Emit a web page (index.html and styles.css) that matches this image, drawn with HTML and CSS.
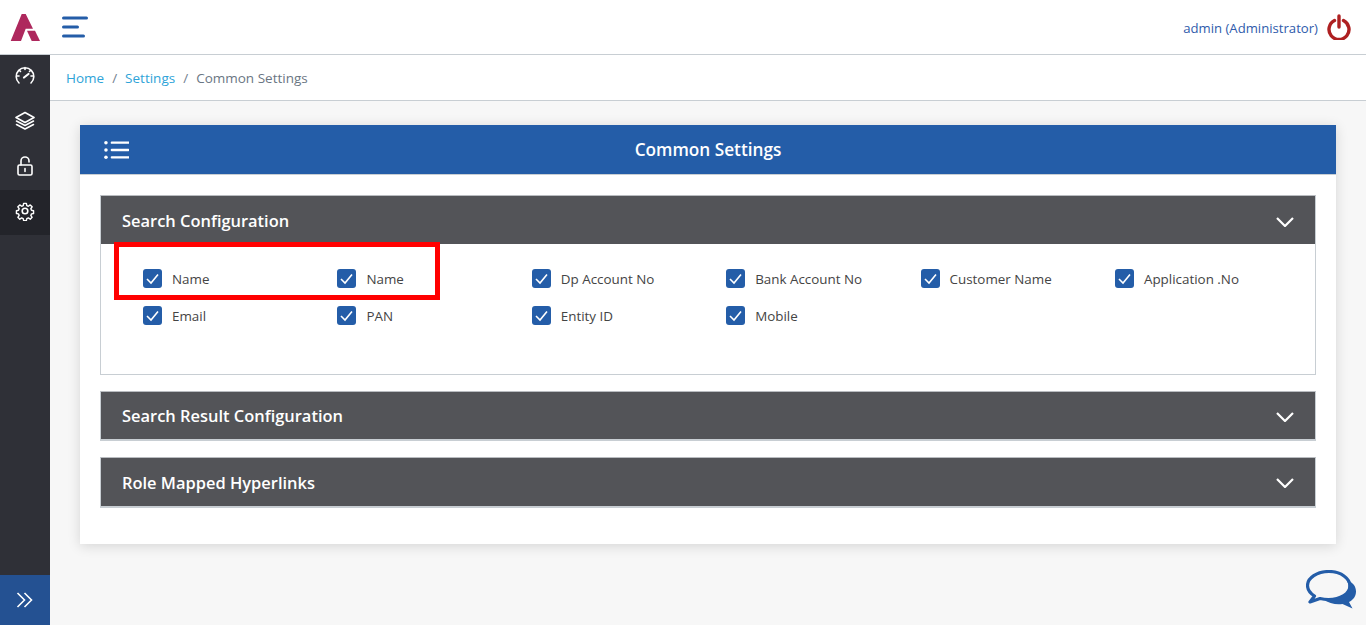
FILE: index.html
```html
<!DOCTYPE html>
<html lang="en">
<head>
<meta charset="utf-8">
<title>Common Settings</title>
<link rel="stylesheet" href="styles.css">
</head>
<body>
<header class="topbar">
  <svg class="logo" viewBox="0 0 30 27"><path fill="#ae285d" d="M.7 27 11.700 0h4L23 14.700h-7.300L11 27z"/><path fill="#ae285d" d="M17 16.700h8L30 27h-8.300z"/></svg>
  <svg class="menu-icon" viewBox="0 0 26 22"><path d="M1.500 2h23M1.500 11h14M1.500 20h20" stroke="#245da8" stroke-width="3" stroke-linecap="round" fill="none"/></svg>
  <div class="user">
    <span class="user-name">admin (Administrator)</span>
    <svg class="power" viewBox="0 0 24 26"><path d="M7.500 6.500a10 10 0 1 0 9 0" fill="none" stroke="#ae2021" stroke-width="3.400" stroke-linecap="round"/><path d="M12 2v11" stroke="#ae2021" stroke-width="3.400" stroke-linecap="round"/></svg>
  </div>
</header>
<div class="layout">
  <aside class="sidebar">
    <a class="nav-item"><svg viewBox="0 0 20 20" class="nav-icon"><path d="M4 17A8.800 8.800 0 1 1 16 17M10 1.500v2M2 10H4M16 10h2M4 4l1.500 1.500M16 4l-1.500 1.500" /><path d="M9 11.500 13.500 8" stroke-width="2.200"/></svg></a>
    <a class="nav-item"><svg viewBox="0 0 20 20" class="nav-icon"><path d="M10 1.500 19 6.500 10 11.500 1 6.500z"/><path d="M1.500 10 10 14.500 18.500 10M1.500 13.500 10 18 18.500 13.500"/></svg></a>
    <a class="nav-item"><svg viewBox="0 0 20 20" class="nav-icon"><rect x="3" y="9" width="14" height="10" rx="1.500"/><path d="M6 9V5a4 4 0 0 1 8 0v1M10 12.500v3"/></svg></a>
    <a class="nav-item active"><svg viewBox="0 0 20 20" class="nav-icon"><circle cx="10" cy="10" r="2.800"/><path d="M8.500 1.500h3l.5 2.500 1.700.7 2.100-1.400 2.100 2.100-1.400 2.100.7 1.700 2.300.5v3l-2.300.5-.7 1.700 1.400 2.100-2.100 2.100-2.100-1.400-1.700.7-.5 2.300h-3l-.5-2.300-1.700-.7-2.100 1.400-2.100-2.100 1.400-2.100-.7-1.700-2.300-.5v-3l2.300-.5.7-1.700-1.400-2.100 2.100-2.100 2.100 1.400 1.700-.7z" transform="translate(1 1) scale(.9)"/></svg></a>
    <a class="expand"><svg viewBox="0 0 18 16" class="expand-icon"><path d="M1.500 1 8.500 8 1.500 15M8.500 1 15.500 8 8.500 15"/></svg></a>
  </aside>
  <main class="content">
    <nav class="breadcrumb">
      <a class="crumb-link">Home</a><span class="crumb-sep">/</span><a class="crumb-link">Settings</a><span class="crumb-sep">/</span><span class="crumb-current">Common Settings</span>
    </nav>
    <section class="panel">
      <div class="panel-head">
        <svg class="list-icon" viewBox="0 0 26 20"><path d="M8 2.500h17M8 10h17M8 17.500h17" stroke="#fff" stroke-width="2.400" stroke-linecap="round"/><circle cx="2" cy="2.500" r="1.800" fill="#fff"/><circle cx="2" cy="10" r="1.800" fill="#fff"/><circle cx="2" cy="17.500" r="1.800" fill="#fff"/></svg>
        <h1 class="panel-title">Common Settings</h1>
      </div>
      <div class="panel-body">
        <div class="accordion">
          <div class="acc-head"><span>Search Configuration</span><svg class="chevron" viewBox="0 0 18 10"><path d="M1 1 9 9 17 1"/></svg></div>
          <div class="acc-body">
            <div class="highlight"></div>
            <div class="check-grid">
              <label class="check"><span class="box"><svg viewBox="0 0 19 19"><path d="M4 10 8 14 15 5.500"/></svg></span>Name</label>
              <label class="check"><span class="box"><svg viewBox="0 0 19 19"><path d="M4 10 8 14 15 5.500"/></svg></span>Name</label>
              <label class="check"><span class="box"><svg viewBox="0 0 19 19"><path d="M4 10 8 14 15 5.500"/></svg></span>Dp Account No</label>
              <label class="check"><span class="box"><svg viewBox="0 0 19 19"><path d="M4 10 8 14 15 5.500"/></svg></span>Bank Account No</label>
              <label class="check"><span class="box"><svg viewBox="0 0 19 19"><path d="M4 10 8 14 15 5.500"/></svg></span>Customer Name</label>
              <label class="check"><span class="box"><svg viewBox="0 0 19 19"><path d="M4 10 8 14 15 5.500"/></svg></span>Application .No</label>
              <label class="check"><span class="box"><svg viewBox="0 0 19 19"><path d="M4 10 8 14 15 5.500"/></svg></span>Email</label>
              <label class="check"><span class="box"><svg viewBox="0 0 19 19"><path d="M4 10 8 14 15 5.500"/></svg></span>PAN</label>
              <label class="check"><span class="box"><svg viewBox="0 0 19 19"><path d="M4 10 8 14 15 5.500"/></svg></span>Entity ID</label>
              <label class="check"><span class="box"><svg viewBox="0 0 19 19"><path d="M4 10 8 14 15 5.500"/></svg></span>Mobile</label>
            </div>
          </div>
        </div>
        <div class="accordion collapsed">
          <div class="acc-head"><span>Search Result Configuration</span><svg class="chevron" viewBox="0 0 18 10"><path d="M1 1 9 9 17 1"/></svg></div>
        </div>
        <div class="accordion collapsed last">
          <div class="acc-head"><span>Role Mapped Hyperlinks</span><svg class="chevron" viewBox="0 0 18 10"><path d="M1 1 9 9 17 1"/></svg></div>
        </div>
      </div>
    </section>
    <svg class="chat" viewBox="0 0 50 42">
      <path d="M23 1.500C11 1.500 1.500 8 1.500 15.500c0 4.500 3 8 7 10.500L4 32l10-3.500c2.500.6 5.500 1 8.500 1 12 0 21.500-6 21.500-13.500S35 1.500 23 1.500z" fill="none" stroke="#245da8" stroke-width="3.200" stroke-linejoin="round"/>
      <path d="M41.500 10.500C47.500 12.500 50 17 50 21.500c0 5-3 8.500-7 10.500l3.500 6.500-10-4.500c-6 1-14-.5-19-4.500 10 2 20.500-1 24-8.500 1.500-3.500 1-7.500-.5-10.500z" fill="#245da8"/>
    </svg>
  </main>
</div>
</body>
</html>
```
FILE: styles.css
```css
* { box-sizing: border-box; }
html, body { margin: 0; height: 100%; overflow: hidden; }
body { font-family: "Open Sans", "Noto Sans", sans-serif; font-size: 13px; background: #f7f7f7; color: #444; }
.topbar { height: 55px; background: #fff; border-bottom: 1px solid #c8ced3; display: flex; align-items: center; padding: 0 15px 0 10px; }
.logo { width: 30px; height: 27px; }
.menu-icon { width: 26px; height: 22px; margin-left: 22px; }
.user { margin-left: auto; display: flex; align-items: center; gap: 9px; }
.user-name { color: #2f5bab; font-size: 13.150px; position: relative; top: 1px; }
.power { width: 24px; height: 26px; }
.layout { display: flex; height: 570px; }
.sidebar { width: 50px; background: #2f3037; display: flex; flex-direction: column; flex: none; }
.nav-item { height: 45px; display: flex; align-items: center; justify-content: center; padding-bottom: 4px; }
.nav-item.active { background: #23242a; }
.nav-icon { width: 20px; height: 20px; fill: none; stroke: #fff; stroke-width: 1.600; stroke-linejoin: round; stroke-linecap: round; }
.expand { margin-top: auto; height: 50px; background: #245192; display: flex; align-items: center; justify-content: center; }
.expand-icon { width: 18px; height: 16px; fill: none; stroke: #fff; stroke-width: 1.600; }
.content { flex: 1; position: relative; min-width: 0; }
.breadcrumb { height: 46px; background: #fff; border-bottom: 1px solid #c8ced3; display: flex; align-items: center; padding: 0 16px; font-size: 13.500px; }
.crumb-link { color: #2ea3d8; }
.crumb-sep { color: #73818f; margin: 0 8px; }
.crumb-current { color: #6a7683; }
.panel { margin: 24px 30px 0; background: #fff; box-shadow: 0 2px 12px rgba(0,0,0,.14); height: 419px; }
.panel-head { height: 50px; background: #245da8; border-bottom: 1px solid #c8ced3; display: flex; align-items: center; justify-content: center; position: relative; }
.list-icon { width: 25.500px; height: 20px; position: absolute; left: 23.500px; top: 14.500px; }
.panel-title { margin: 0; color: #fff; font-size: 17.200px; font-weight: 600; }
.panel-body { padding: 20px; display: flex; flex-direction: column; gap: 16px; }
.accordion { border: 1px solid #c8ced3; border-top-color: #b9bcc0; }
.accordion.collapsed { border-bottom-width: 2px; }
.accordion.collapsed .acc-head { height: 47px; }
.accordion.collapsed .chevron { top: 1px; }
.accordion.last .acc-head { height: 48px; }
.acc-head { height: 48px; background: #535458; color: #fff; font-size: 16.450px; font-weight: 600; display: flex; align-items: center; justify-content: space-between; padding: 0 21px; }
.chevron { width: 18px; height: 10px; fill: none; stroke: #fff; stroke-width: 2.200; position: relative; top: 2px; }
.acc-body { height: 130px; position: relative; padding: 25px 42px 0; }
.highlight { position: absolute; left: 12.500px; top: -2px; width: 326.500px; height: 57.500px; border: 5px solid #f00; }
.check-grid { display: grid; grid-template-columns: repeat(6, 194.400px); grid-auto-rows: 37px; position: relative; }
.check { display: flex; align-items: flex-start; gap: 10px; color: #444; font-size: 13.400px; line-height: 20px; }
.box { width: 19px; height: 19px; background: #245da8; border-radius: 3px; flex: none; display: block; }
.box svg { display: block; width: 19px; height: 19px; fill: none; stroke: #fff; stroke-width: 1.600; }
.chat { position: absolute; right: 10px; bottom: 13px; width: 50px; height: 42px; }
```
